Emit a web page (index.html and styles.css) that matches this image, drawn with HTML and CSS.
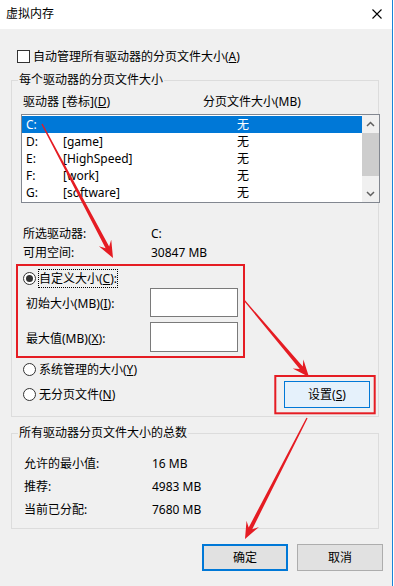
FILE: index.html
```html
<!DOCTYPE html>
<html lang="zh-CN">
<head>
<meta charset="utf-8">
<title>虚拟内存</title>
<link rel="stylesheet" href="styles.css">
</head>
<body>
<div class="window">
  <div class="titlebar">
    <span class="title">虚拟内存</span>
    <svg class="close" width="10" height="10" viewBox="0 0 10 10"><path d="M0.5 0.5 L9.5 9.5 M9.5 0.5 L0.5 9.5" stroke="#000" stroke-width="1.1" fill="none"/></svg>
  </div>
  <div class="content">
    <div class="autocheck"><span class="checkbox"></span><span class="check-label">自动管理所有驱动器的分页文件大小(<u>A</u>)</span></div>

    <div class="group group-drives">
      <div class="group-title">每个驱动器的分页文件大小</div>
      <div class="list-head"><span class="col-drive">驱动器 [卷标](<u>D</u>)</span><span>分页文件大小(MB)</span></div>
      <div class="listbox">
        <div class="rows">
          <div class="row selected"><span class="c1">C:</span><span class="c2"></span><span class="c3">无</span></div>
          <div class="row"><span class="c1">D:</span><span class="c2">[game]</span><span class="c3">无</span></div>
          <div class="row"><span class="c1">E:</span><span class="c2">[HighSpeed]</span><span class="c3">无</span></div>
          <div class="row"><span class="c1">F:</span><span class="c2">[work]</span><span class="c3">无</span></div>
          <div class="row"><span class="c1">G:</span><span class="c2">[software]</span><span class="c3">无</span></div>
        </div>
        <div class="scrollbar">
          <div class="sb-btn"><svg width="9" height="6" viewBox="0 0 9 6"><path d="M1 5 L4.5 1.5 L8 5" stroke="#606060" stroke-width="1.5" fill="none"/></svg></div>
          <div class="sb-track"><div class="sb-thumb"></div></div>
          <div class="sb-btn"><svg width="9" height="6" viewBox="0 0 9 6"><path d="M1 1 L4.5 4.5 L8 1" stroke="#606060" stroke-width="1.5" fill="none"/></svg></div>
        </div>
      </div>
      <div class="info">
        <div class="info-row"><span class="info-label">所选驱动器:</span><span>C:</span></div>
        <div class="info-row"><span class="info-label">可用空间:</span><span>30847 MB</span></div>
      </div>
      <div class="radio-row custom"><span class="radio checked"></span><span class="radio-label focus">自定义大小(<u>C</u>):</span></div>
      <div class="field-row"><span class="field-label">初始大小(MB)(<u>I</u>):</span><span class="textbox"></span></div>
      <div class="field-row field-max"><span class="field-label">最大值(MB)(<u>X</u>):</span><span class="textbox"></span></div>
      <div class="radio-row system"><span class="radio"></span><span class="radio-label">系统管理的大小(<u>Y</u>)</span></div>
      <div class="last-row">
        <div class="radio-row"><span class="radio"></span><span class="radio-label">无分页文件(<u>N</u>)</span></div>
        <button class="btn btn-set">设置(<u>S</u>)</button>
      </div>
    </div>

    <div class="group group-total">
      <div class="group-title">所有驱动器分页文件大小的总数</div>
      <div class="totals">
        <div class="total-row"><span class="total-label">允许的最小值:</span><span>16 MB</span></div>
        <div class="total-row"><span class="total-label">推荐:</span><span>4983 MB</span></div>
        <div class="total-row"><span class="total-label">当前已分配:</span><span>7680 MB</span></div>
      </div>
    </div>

    <div class="buttons">
      <button class="btn btn-ok">确定</button>
      <button class="btn btn-cancel">取消</button>
    </div>
  </div>

  <svg class="annot" width="394" height="586" viewBox="0 0 394 586">
    <rect x="17" y="265" width="227" height="92" fill="none" stroke="#e51c23" stroke-width="2"/>
    <rect x="275.3" y="376" width="99.4" height="37.3" fill="none" stroke="#e51c23" stroke-width="2"/>
    <polygon fill="#e51c23" points="41.4,124.3 105.61,248.34 98.85,246.26 113,258 111.23,239.70 109.15,246.46 42.6,123.7"/>
    <polygon fill="#e51c23" points="243.6,300.4 299.73,369.12 292.68,368.53 309,377 303.38,359.49 302.79,366.54 244.4,299.6"/>
    <polygon fill="#e51c23" points="306.4,417.8 248.69,527.41 246.52,520.68 245,539 258.98,527.06 252.25,529.23 307.6,418.2"/>
  </svg>
</div>
</body>
</html>
```

FILE: styles.css
```css
* { box-sizing: border-box; }

body {
  margin: 0;
  width: 394px;
  height: 586px;
  overflow: hidden;
  background: #ffffff;
  font-family: "Noto Sans", "Noto Sans CJK SC", sans-serif;
  font-size: 12px;
  color: #000;
}

u { text-decoration: underline; text-underline-offset: 1px; }

.window {
  position: relative;
  width: 393px;
  height: 586px;
  border-right: 1px solid #1883d7;
  background: #f0f0f0;
}

.titlebar {
  height: 29px;
  background: #fff;
  display: flex;
  align-items: center;
  justify-content: space-between;
  padding: 0 10px 2px 6px;
  line-height: 16px;
}

.close { display: block; }

.content { display: flex; flex-direction: column; }

.autocheck {
  margin-top: 21px;
  height: 13px;
  padding-left: 17px;
  display: flex;
  align-items: center;
  line-height: 16px;
}

.checkbox {
  width: 13px;
  height: 13px;
  border: 1px solid #333;
  background: #fff;
  flex: none;
}

.check-label { margin-left: 3px; }

.group {
  margin-left: 11px;
  width: 368px;
  border: 1px solid #dcdcdc;
  display: flex;
  flex-direction: column;
}

.group-drives { margin-top: 17px; padding-bottom: 8px; }
.group-total { margin-top: 16px; padding-bottom: 7px; }

.group-title {
  margin: -9px 0 0 6px;
  padding: 0 1px;
  line-height: 16px;
  height: 16px;
  background: #f0f0f0;
  width: fit-content;
}

.list-head {
  margin-top: 6px;
  padding-left: 11px;
  display: flex;
  line-height: 16px;
}

.col-drive { width: 180px; }

.listbox {
  margin-top: 4px;
  margin-left: 9px;
  width: 359px;
  height: 89px;
  border: 1px solid #828790;
  background: #fff;
  display: flex;
}

.rows { width: 340px; padding-top: 1px; }

.row {
  height: 17px;
  line-height: 17px;
  display: flex;
  padding-left: 4px;
}

.row.selected { background: #0078d7; color: #fff; }

.c1 { width: 37px; }
.c2 { width: 174px; }

.scrollbar {
  width: 17px;
  background: #f0f0f0;
  display: flex;
  flex-direction: column;
}

.sb-btn {
  height: 17px;
  display: flex;
  align-items: center;
  justify-content: center;
}

.sb-track { flex: 1; padding-top: 1px; }

.sb-thumb { height: 43px; background: #cdcdcd; }

.info { margin-top: 21px; }

.info-row, .total-row {
  display: flex;
  align-items: center;
  height: 19px;
  padding-left: 11px;
  line-height: 16px;
}

.info-label { width: 128px; }

.radio-row {
  display: flex;
  align-items: center;
  height: 19px;
  padding-left: 11px;
  line-height: 16px;
}

.radio-row.custom { margin-top: 7px; }
.radio-row.system { margin-top: 8px; }

.radio {
  width: 13px;
  height: 13px;
  border: 1px solid #333;
  border-radius: 50%;
  background: #fff;
  flex: none;
  display: flex;
  align-items: center;
  justify-content: center;
}

.radio.checked::after {
  content: "";
  width: 7px;
  height: 7px;
  border-radius: 50%;
  background: #333;
}

.radio-label { margin-left: 3px; }

.radio-label.focus {
  margin-left: 2px;
  padding: 0 0 0 0;
  border: 1px dotted #000;
  line-height: 17px;
}

.field-row {
  display: flex;
  align-items: center;
  height: 29px;
  padding-left: 14px;
  line-height: 16px;
}

.field-label { width: 124px; padding-top: 3px; }

.field-max { margin-top: 5px; height: 30px; }

.textbox {
  width: 88px;
  height: 100%;
  border: 1px solid #7a7a7a;
  background: #fff;
}

.last-row {
  margin-top: 2px;
  height: 27px;
  display: flex;
  align-items: center;
  justify-content: space-between;
  padding-right: 8px;
}

.last-row .radio-row { height: 19px; }

.btn {
  font: inherit;
  color: #000;
  margin: 0;
  padding: 0;
  width: 86px;
  height: 27px;
  line-height: 16px;
  background: #e1e1e1;
  border: 1px solid #adadad;
  cursor: default;
}

.btn-set { background: #e5f1fb; border-color: #0078d7; }

.totals { margin-top: 11px; }

.total-row { height: 23px; padding-left: 12px; }

.total-label { width: 128px; }

.buttons {
  margin-top: 15px;
  display: flex;
  justify-content: flex-end;
  gap: 9px;
  padding-right: 9px;
}

.btn-ok { border: 2px solid #0078d7; }

.annot {
  position: absolute;
  left: 0;
  top: 0;
  pointer-events: none;
}
```
